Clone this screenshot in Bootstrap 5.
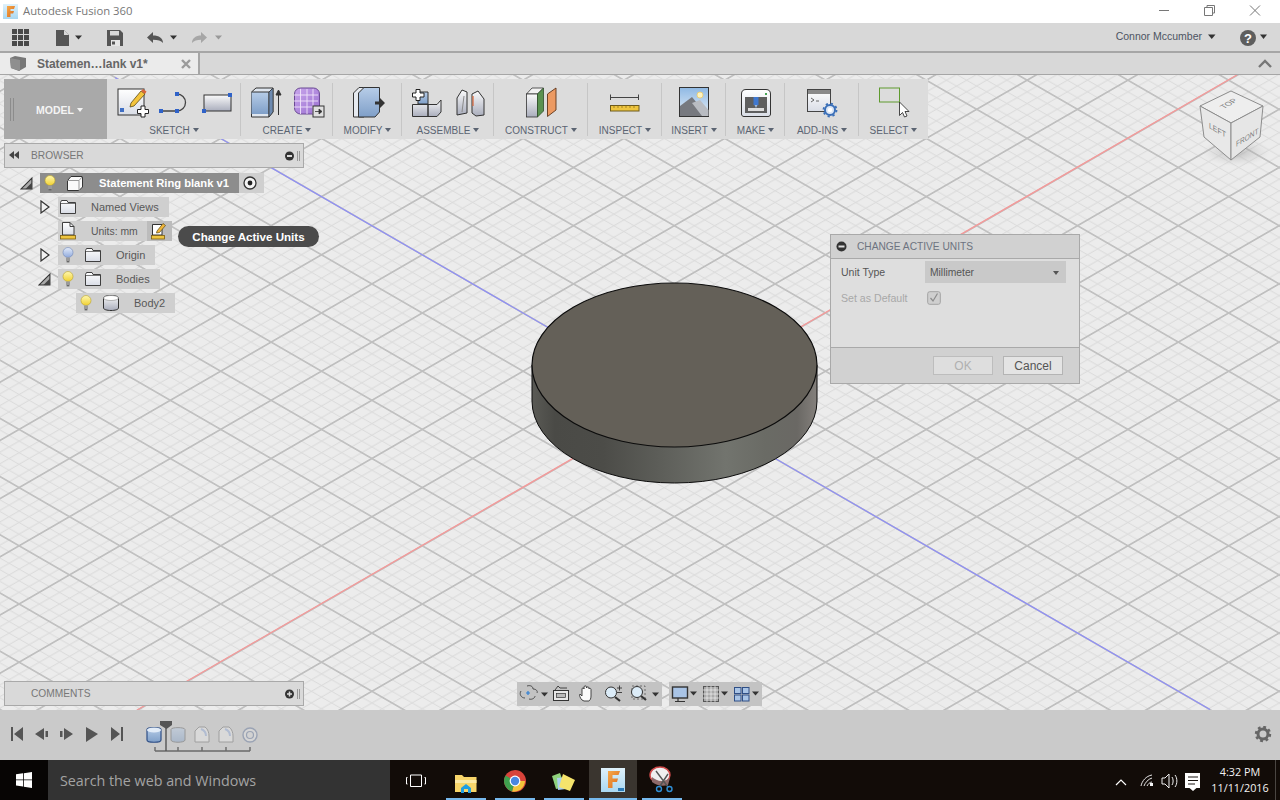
<!DOCTYPE html>
<html lang="en">
<head>
<meta charset="utf-8">
<title>Autodesk Fusion 360</title>
<link href="https://cdn.jsdelivr.net/npm/bootstrap@5.3.0/dist/css/bootstrap.min.css" rel="stylesheet">
<style>
html,body{height:100%;overflow:hidden}
body{font-family:"Liberation Sans",Arial,sans-serif;font-size:11px;color:#555;background:#ececec}
svg{display:block;flex:none}
.app{height:800px}
.titlebar{height:23px;background:#fff;color:#777;font-family:"Open Sans",sans-serif;font-size:11.3px}
.quickbar{height:28px;background:#d8d8d8}
.user-name{color:#4d5462;font-size:10.5px;margin-right:5px}
.tabbar{height:24px;background:#d8d8d8;border-top:2px solid #a6a6a6;border-bottom:1px solid #a6a6a6}
.doc-tab{width:200px;background:#ebebeb;border-right:2px solid #a6a6a6;padding-left:10px;color:#666;font-weight:700;font-size:12px}
.doc-title{margin-left:11px;width:144px;white-space:nowrap;letter-spacing:-.05px}
.stage{height:635px;overflow:hidden}
.grid-art{position:absolute;left:0;top:0}
.ribbon{position:absolute;left:4px;top:4px;height:60px;background:#dcdcdc}
.model-btn{width:103px;background:#a9a9a9;color:#f4f4f4;font-weight:700;font-size:10.5px;padding:3px 0 0 6px}
.model-grip{margin-right:21px;margin-top:-3px}
.tri{display:inline-block;width:0;height:0;border-left:3.5px solid transparent;border-right:3.5px solid transparent;border-top:4px solid currentColor;margin-left:3px;vertical-align:2px}
.tool-group{position:relative;height:60px}
.tool-group::after{content:"";position:absolute;right:0;top:4px;bottom:3px;width:1px;background:#c6c6c6}
.tool-group:last-child::after{display:none}
.tool-label{color:#5b6472;font-size:10px;line-height:12px;margin-top:5px;white-space:nowrap}
.g-sketch{width:134px}.g-create{width:92px}.g-modify{width:69px}.g-assemble{width:92px}.g-construct{width:94px}
.g-inspect{width:74px}.g-insert{width:64px}.g-make{width:59px}.g-addins{width:74px}.g-select{width:69px}
.side-panel{position:absolute;left:4px;top:68px;width:300px}
.panel-head{height:25px;background:#d9d9d9;border:1px solid #a9a9a9;color:#777;font-size:10.2px;padding-left:4px;padding-right:1px}
.panel-name{margin-left:12px}
.panel-name.solo{margin-left:22px}
.comments{position:absolute;left:4px;bottom:4px;width:300px}
.tree{margin-top:5px;margin-left:-4px}
.tree-row{height:20px;margin-bottom:4px}
.lvl0{margin-left:20px}.lvl1{margin-left:38px}.lvl2{margin-left:76px}
.twist{width:20px}
.shut{margin-left:2px}
.node{height:20px;background:#cfcfcf;color:#585858;font-size:11px}
.node.solid{background:#8d8d8d;color:#fff;font-weight:700;font-size:11.2px}
.slot-a{width:20px}.slot-b{width:30px}
.node-text{margin-left:8px;padding:1px 10px 0 0;white-space:nowrap}
.solid .node-text{margin-left:9px;padding-top:0}
.node-text.wide{margin-left:13px}
.node-text.tight{font-size:10.4px;padding-right:9px}
.node-end{height:20px;background:#cfcfcf;width:25px}
.node-end.dark{background:#bcbcbc}
.tip{position:absolute;left:178px;top:151px;height:21px;width:141px;background:#4b4b4b;color:#fff;font-weight:700;border-radius:11px;font-size:11.6px;padding-top:1px}
.dlg{position:absolute;left:830px;top:159px;width:250px;height:150px;background:#dedede;border:1px solid #a9a9a9;color:#555;font-size:10.5px}
.dlg-head{height:24px;background:#d1d1d1;border-bottom:1px solid #a9a9a9;color:#6d7380;padding-left:5px;font-size:10.2px}
.dlg-title{margin-left:10px}
.dlg-body{height:88px;padding:2px 13px 0 10px}
.field-name{width:84px;padding-top:1px}
.pick{width:141px;height:22px;background:#c9c9c9;padding:1px 7px 0 5px;color:#555;font-size:10.3px}
.muted-name{color:#a8a8a8;font-size:10.6px}
.check-box{margin-left:2px}
.dlg-row2{margin-top:4px;height:22px}
.dlg-foot{height:36px;background:#d1d1d1;border-top:1px solid #a9a9a9;padding:8px 16px 0 0;gap:10px}
.dlg-btn{width:60px;height:19px;padding:0;border-radius:0;border:1px solid #b4b4b4;background:#e4e4e4;color:#555;font-size:12px;line-height:18px}
.dlg-btn:disabled{background:#dedede;color:#b0b0b0;border-color:#bdbdbd;opacity:1}
.navs{position:absolute;left:517px;bottom:4px;gap:7px}
.cube{position:absolute;left:1190px;top:10px}
.cube text{font-family:"Liberation Sans",sans-serif;font-size:8px;fill:#7d7d7d}
.timeline{height:50px;background:#cacaca}
.taskbar{height:40px;background:#120c08;color:#f2f2f2}
.win-box{width:48px;background:#070504}
.search-box{width:342px;background:#333;color:#a3a3a3;font-family:"Open Sans",sans-serif;font-size:14.3px;padding:1px 0 0 12px}
.clock{width:76px;font-family:"Open Sans",sans-serif;font-size:10.8px;line-height:16px;text-align:center;padding-left:5px;border-right:1px solid #4a4642}
.clock-gap{width:4px}
</style>
</head>
<body>
<svg width="0" height="0" class="position-absolute">
<defs>
<linearGradient id="bulbY" x1="0" y1="0" x2="0" y2="1"><stop offset="0" stop-color="#fff8b0"/><stop offset="1" stop-color="#f0d030"/></linearGradient>
<linearGradient id="bulbB" x1="0" y1="0" x2="0" y2="1"><stop offset="0" stop-color="#e4ecfa"/><stop offset="1" stop-color="#8fa9dc"/></linearGradient>
<linearGradient id="paper" x1="0" y1="0" x2="0" y2="1"><stop offset="0" stop-color="#fff"/><stop offset="1" stop-color="#d9dde6"/></linearGradient>
<linearGradient id="steel" x1="0" y1="0" x2="0" y2="1"><stop offset="0" stop-color="#fbfbfb"/><stop offset="1" stop-color="#a9adbc"/></linearGradient>
<linearGradient id="blueBox" x1="0" y1="0" x2="0" y2="1"><stop offset="0" stop-color="#b7cde8"/><stop offset="1" stop-color="#7f9fc8"/></linearGradient>
<linearGradient id="sky" x1="0" y1="0" x2="0" y2="1"><stop offset="0" stop-color="#8fb9e4"/><stop offset="1" stop-color="#e6eef6"/></linearGradient>
<linearGradient id="purple" x1="0" y1="0" x2="1" y2="1"><stop offset="0" stop-color="#c9a6ec"/><stop offset="1" stop-color="#9a70d0"/></linearGradient>
<linearGradient id="fF" x1="0" y1="0" x2="1" y2="1"><stop offset="0" stop-color="#f6a94a"/><stop offset="1" stop-color="#d9691c"/></linearGradient>
<linearGradient id="fBg" x1="0" y1="0" x2="0" y2="1"><stop offset="0" stop-color="#dff1fb"/><stop offset="1" stop-color="#a9d8f2"/></linearGradient>
<linearGradient id="discSide" x1="0" y1="0" x2="1" y2="0"><stop offset="0" stop-color="#5a5a55"/><stop offset=".08" stop-color="#4a4a46"/><stop offset=".25" stop-color="#4c4c48"/><stop offset=".45" stop-color="#5d5e59"/><stop offset=".68" stop-color="#72746e"/><stop offset=".82" stop-color="#6a6b65"/><stop offset=".93" stop-color="#6a6864"/><stop offset="1" stop-color="#84807c"/></linearGradient>
<pattern id="isoGrid" patternUnits="userSpaceOnUse" width="50" height="50" patternTransform="matrix(1.008 -.582 1.008 .582 674.3 325.3)">
<path d="M10 0V50M20 0V50M30 0V50M40 0V50M0 10H50M0 20H50M0 30H50M0 40H50" stroke="#dcdcdc" stroke-width="1" fill="none"/>
<path d="M0 0V50M50 0V50M0 0H50M0 50H50" stroke="#bfbfbf" stroke-width="1.6" fill="none"/>
</pattern>
<symbol id="bulb" viewBox="0 0 12 16"><circle cx="6" cy="5.5" r="5" fill="url(#bulbY)" stroke="#b9a12a" stroke-width=".6"/><rect x="4" y="10.5" width="4" height="3.5" fill="#9a9a9a"/><rect x="4.6" y="14" width="2.8" height="1.4" fill="#666"/></symbol>
<symbol id="bulbOff" viewBox="0 0 12 16"><circle cx="6" cy="5.5" r="5" fill="url(#bulbB)" stroke="#6f86b8" stroke-width=".6"/><rect x="4" y="10.5" width="4" height="3.5" fill="#9a9a9a"/><rect x="4.6" y="14" width="2.8" height="1.4" fill="#666"/></symbol>
<symbol id="folder" viewBox="0 0 16 14"><path d="M.5 2.5V13.5H15.5V2.5H8L7 .5H1.5Z" fill="url(#paper)" stroke="#3f3f3f"/><path d="M.5 3.5H15.5" stroke="#3f3f3f" stroke-width=".7"/></symbol>
<symbol id="unitdoc" viewBox="0 0 16 18"><path d="M2.5 .5H10L14 4.5V13H2.5Z" fill="url(#paper)" stroke="#3f3f3f"/><path d="M10 .5V4.5H14" fill="none" stroke="#3f3f3f"/><rect x=".5" y="13.5" width="15" height="3.5" fill="#eec53f" stroke="#7a5d10" stroke-width=".8"/></symbol>
<symbol id="tw-open" viewBox="0 0 12 12"><path d="M1 11 11 1V11Z" fill="#aaa" stroke="#333"/><path d="M5 11 11 5V11Z" fill="#444"/></symbol>
<symbol id="tw-shut" viewBox="0 0 10 14"><path d="M1 1 9 7 1 13Z" fill="#f2f2f2" stroke="#333" stroke-width="1.2"/></symbol>
</defs>
</svg>

<div class="app d-flex flex-column">
  <!-- title bar -->
  <div class="titlebar d-flex align-items-center justify-content-between">
    <div class="d-flex align-items-center">
      <svg width="23" height="23" viewBox="0 0 23 23"><rect x="3" y="4" width="15" height="15" fill="url(#fBg)"/><path d="M7 6H15L14 9H10.5V11H14L13.2 13.6H10.5V17H7Z" fill="url(#fF)"/></svg>
      <span>Autodesk Fusion 360</span>
    </div>
    <svg width="140" height="23" viewBox="1140 0 140 23" fill="none" stroke="#777"><path d="M1159 10.5H1169"/><path d="M1204.5 7.5H1212.5V15.5H1204.5ZM1207 7.5V5.5H1214.5V13H1212.5"/><path d="M1250 5.5 1260 15.5M1260 5.5 1250 15.5"/></svg>
  </div>
  <!-- quick access -->
  <div class="quickbar d-flex align-items-center justify-content-between">
    <svg width="240" height="28" viewBox="0 23 240 28">
      <path d="M12 29h5v5h-5zM18 29h5v5h-5zM24 29h5v5h-5zM12 35h5v5h-5zM18 35h5v5h-5zM24 35h5v5h-5zM12 41h5v5h-5zM18 41h5v5h-5zM24 41h5v5h-5z" fill="#4a4a4a"/>
      <path d="M56 30H64L69 35V46H56Z" fill="#555"/><path d="M64 30V35H69Z" fill="#d8d8d8"/><path d="M75 35.500h7l-3.500 4z" fill="#333"/>
      <path d="M107 30H120L123 33V46H107Z" fill="#555"/><rect x="110" y="31" width="9" height="4.500" fill="#d8d8d8"/><rect x="111" y="40" width="9" height="6" fill="#e6e6e6"/><rect x="112" y="41.500" width="3" height="3" fill="#555"/>
      <path d="M147 37.500 153 32V35.500C159 35.500 163 38 163 43C161 40.500 158 39.700 153 39.700V43Z" fill="#555"/><path d="M170 35.500h7l-3.500 4z" fill="#333"/>
      <path d="M207 37.500 201 32V35.500C196 35.500 192 38 192 43C194 40.500 197 39.700 201 39.700V43Z" fill="#a6a6a6"/><path d="M215 35.500h7l-3.500 4z" fill="#999"/>
    </svg>
    <div class="d-flex align-items-center">
      <span class="user-name">Connor Mccumber</span>
      <svg width="73" height="28" viewBox="1207 23 73 28"><path d="M1208 34.500h7.500l-3.750 4.500z" fill="#333"/><circle cx="1248" cy="38" r="8" fill="#5e5e5e"/><text x="1248" y="42.500" text-anchor="middle" font-family="Liberation Sans" font-size="13" font-weight="700" fill="#fff">?</text><path d="M1260 34.500h7l-3.500 4.500z" fill="#333"/></svg>
    </div>
  </div>
  <!-- tabs -->
  <div class="tabbar d-flex justify-content-between">
    <div class="doc-tab d-flex align-items-center">
      <svg width="16" height="16" viewBox="0 0 16 16"><path d="M0 2 5 0 16 2V11L9 15 1 12Z" fill="#777"/><path d="M0 2 10 4V15L1 12Z" fill="#8f8f8f"/></svg>
      <span class="doc-title">Statemen…lank v1*</span>
      <svg width="10" height="10" viewBox="0 0 10 10"><path d="M1 1 9 9M9 1 1 9" stroke="#9b9b9b" stroke-width="2.400"/></svg>
    </div>
    <svg class="align-self-center me-2" width="14" height="9" viewBox="0 0 14 9"><path d="M1 8 7 2 13 8" fill="none" stroke="#777" stroke-width="2.400"/></svg>
  </div>

  <!-- 3D canvas -->
  <div class="stage position-relative flex-grow-0">
    <svg class="grid-art" width="1280" height="635" viewBox="0 0 1280 635">
      <rect width="1280" height="635" fill="#ececec"/>
      <rect width="1280" height="635" fill="url(#isoGrid)"/>
      <path d="M1237 0 137 635" stroke="#f49a9a" stroke-width="1.400"/>
      <path d="M115 2.500 1210 634.500" stroke="#8e8ef5" stroke-width="1.200"/>
      <path d="M532 290V326A142.500 82 0 0 0 817 326V290Z" fill="url(#discSide)" stroke="#0c0c0c"/>
      <ellipse cx="674.500" cy="290" rx="142.500" ry="82" fill="#646058" stroke="#0c0c0c" stroke-width="1.200"/>
    </svg>

    <!-- ribbon -->
    <div class="ribbon d-flex">
      <div class="model-btn d-flex align-items-center">
        <svg class="model-grip" width="5" height="23" viewBox="0 0 5 23"><path d="M.5 0V23M3.500 0V23" stroke="#8c8c8c"/></svg>
        <span>MODEL<i class="tri"></i></span>
      </div>
      <div class="tool-group g-sketch d-flex flex-column align-items-center">
        <svg width="134" height="41" viewBox="107 79 134 41">
          <rect x="118" y="89" width="26" height="26" fill="url(#paper)" stroke="#333"/>
          <path d="M131 103 141 91 145 94 134 106 130 107Z" fill="#f4c43c" stroke="#5a4a14" stroke-width=".8"/><path d="M141 91 143 89 146.500 91.500 145 94Z" fill="#d9663a"/>
          <rect x="120" y="108" width="4" height="4" fill="#3f6fc4"/>
          <path d="M137.500 109.500H141V106H145V109.500H148.500V113.500H145V117H141V113.500H137.500Z" fill="#fff" stroke="#222"/>
          <path d="M161 111H177A8.500 8.500 0 0 0 177 94" fill="none" stroke="#444" stroke-width="1.300"/>
          <rect x="159" y="109" width="4" height="4" fill="#2f62c8"/><rect x="175" y="109" width="4" height="4" fill="#2f62c8"/><rect x="175" y="92" width="4" height="4" fill="#2f62c8"/>
          <rect x="204" y="95" width="27" height="16" fill="url(#steel)" stroke="#333"/>
          <rect x="228" y="93" width="4" height="4" fill="#2f62c8"/><rect x="202" y="109" width="4" height="4" fill="#2f62c8"/>
        </svg>
        <span class="tool-label">SKETCH<i class="tri"></i></span>
      </div>
      <div class="tool-group g-create d-flex flex-column align-items-center">
        <svg width="92" height="41" viewBox="241 79 92 41">
          <path d="M251.500 92 256 88H273V112L269 117H251.500Z" fill="#dfe6ef" stroke="#333"/><rect x="251.500" y="92" width="17.500" height="22" fill="url(#blueBox)"/><path d="M269 92V117M251.500 92H269L273 88" fill="none" stroke="#333"/><path d="M269 92 273 88V112L269 117Z" fill="#6d8ab0" stroke="#333" stroke-width=".7"/>
          <path d="M278.500 115V92M276 95 278.500 90 281 95Z" stroke="#333" fill="#333"/>
          <rect x="294.500" y="88" width="25" height="26" rx="6" fill="url(#purple)" stroke="#6b4a94"/>
          <path d="M294 95H318M294 101H318M294 107H318M300.500 89V114M307 89V114M313 89V114" stroke="#f0e4fb" stroke-width=".9"/>
          <rect x="313" y="106" width="11" height="11" fill="#e0e0e0" stroke="#333"/><path d="M315 111.500H319V109L322 111.500 319 114V111.500" fill="#333" stroke="#333" stroke-width=".8"/>
        </svg>
        <span class="tool-label">CREATE<i class="tri"></i></span>
      </div>
      <div class="tool-group g-modify d-flex flex-column align-items-center">
        <svg width="69" height="41" viewBox="333 79 69 41">
          <path d="M353.500 117V93L359 87.500H364V117Z" fill="#e6eaf0" stroke="#333"/><path d="M358.500 117V93L364 87.500H379.500V112L375 117Z" fill="url(#blueBox)" stroke="#333"/>
          <path d="M375 101.500H380V98L385 103 380 108V104.500H375Z" fill="#333"/>
        </svg>
        <span class="tool-label">MODIFY<i class="tri"></i></span>
      </div>
      <div class="tool-group g-assemble d-flex flex-column align-items-center">
        <svg width="92" height="41" viewBox="402 79 92 41">
          <path d="M412.500 104.500H428V116.500H412.500ZM428 104.500H437L441 100V112L437 116.500H428Z" fill="url(#steel)" stroke="#333"/>
          <path d="M418 92H428V104H418Z" fill="url(#blueBox)" stroke="#333"/>
          <path d="M416 89.500H420V93H424V97H420V100.500H416V97H412.500V93H416Z" fill="#fff" stroke="#222"/>
          <path d="M457 115V98L462 90 467 92V113Z" fill="url(#steel)" stroke="#333"/><path d="M472 113V94L478 91 484 99V115L476 116Z" fill="url(#steel)" stroke="#333"/>
          <path d="M473 96V106" stroke="#d9663a" stroke-width="1.200"/><path d="M464 96 462 112" stroke="#8a8a8a"/>
        </svg>
        <span class="tool-label">ASSEMBLE<i class="tri"></i></span>
      </div>
      <div class="tool-group g-construct d-flex flex-column align-items-center">
        <svg width="94" height="41" viewBox="494 79 94 41">
          <path d="M526.500 94 532 88H543.500L537.500 94Z" fill="#f2f2f2" stroke="#333" stroke-width=".8"/><rect x="526.500" y="94" width="11" height="23" fill="url(#steel)" stroke="#333" stroke-width=".8"/><path d="M537.500 94 543.500 88V111L537.500 117Z" fill="#5a9250" stroke="#2f4f2a" stroke-width=".8"/>
          <path d="M547.500 94 556 88V110L547.500 116.500Z" fill="#ec9a62" stroke="#5e3418" stroke-width=".9"/>
        </svg>
        <span class="tool-label">CONSTRUCT<i class="tri"></i></span>
      </div>
      <div class="tool-group g-inspect d-flex flex-column align-items-center">
        <svg width="74" height="41" viewBox="588 79 74 41">
          <path d="M610.500 94.500V100M638.500 94.500V100M610.500 97.500H638.500" stroke="#444" fill="none"/>
          <rect x="610.500" y="105.500" width="28.500" height="5.500" fill="#eec53f" stroke="#6c5a1e"/>
          <path d="M614 105.500V108M618 105.500V108M622 105.500V108M626 105.500V108M630 105.500V108M634 105.500V108" stroke="#8a6c14" stroke-width=".7"/>
        </svg>
        <span class="tool-label">INSPECT<i class="tri"></i></span>
      </div>
      <div class="tool-group g-insert d-flex flex-column align-items-center">
        <svg width="64" height="41" viewBox="662 79 64 41">
          <rect x="679.500" y="87.500" width="29" height="29" fill="url(#sky)" stroke="#333"/>
          <circle cx="700" cy="95" r="3" fill="#fdf3c0" stroke="#efc85a" stroke-width=".7"/>
          <path d="M680 116V106L692 97 708 116Z" fill="#77797f"/><path d="M692 103 700 100 708.500 110V116H702Z" fill="#b9bcc2"/>
        </svg>
        <span class="tool-label">INSERT<i class="tri"></i></span>
      </div>
      <div class="tool-group g-make d-flex flex-column align-items-center">
        <svg width="59" height="41" viewBox="726 79 59 41">
          <path d="M741.500 94C741.500 91 743 89.500 746 89.500H766C769 89.500 770.500 91 770.500 94V114C770.500 115.500 769.500 116.500 768 116.500H744C742.500 116.500 741.500 115.500 741.500 114Z" fill="url(#paper)" stroke="#333"/>
          <rect x="745" y="97" width="22" height="16" fill="#5f5f5f"/><rect x="753.500" y="97" width="5" height="8" fill="#3f78d0"/><path d="M754.500 105H757.500L756 108Z" fill="#9fb9dd"/>
          <rect x="748" y="108" width="16" height="3" fill="#ddd"/><circle cx="766" cy="94" r="1" fill="#0a8a1e"/>
        </svg>
        <span class="tool-label">MAKE<i class="tri"></i></span>
      </div>
      <div class="tool-group g-addins d-flex flex-column align-items-center">
        <svg width="74" height="41" viewBox="785 79 74 41">
          <rect x="807.500" y="89.500" width="23" height="22" fill="url(#paper)" stroke="#444"/><rect x="808" y="90" width="22" height="4" fill="#8a8a8a"/>
          <path d="M811 98 814 100 811 102M816 101H819" fill="none" stroke="#444" stroke-width=".8"/>
          <circle cx="830" cy="110" r="5" fill="#dbe6f6" stroke="#3a6fb8" stroke-width="2"/><circle cx="830" cy="110" r="6.500" fill="none" stroke="#3a6fb8" stroke-width="1.800" stroke-dasharray="2.200 2.900"/><circle cx="830" cy="110" r="2.200" fill="#fff"/>
        </svg>
        <span class="tool-label">ADD-INS<i class="tri"></i></span>
      </div>
      <div class="tool-group g-select d-flex flex-column align-items-center">
        <svg width="69" height="41" viewBox="859 79 69 41">
          <rect x="879.500" y="88" width="20" height="14" fill="#dcdcdc" stroke="#5e9a2e"/>
          <path d="M899.500 102V115.500L902.500 112.500 904.500 117 907 116 905 111.500H909Z" fill="#fff" stroke="#333" stroke-width=".9"/>
        </svg>
        <span class="tool-label">SELECT<i class="tri"></i></span>
      </div>
    </div>

    <!-- browser -->
    <div class="side-panel">
      <div class="panel-head d-flex align-items-center justify-content-between">
        <div class="d-flex align-items-center">
          <svg width="10" height="8" viewBox="0 0 10 8"><path d="M5 0V8L0 4ZM10 0V8L5 4Z" fill="#444"/></svg>
          <span class="panel-name">BROWSER</span>
        </div>
        <svg width="18" height="14" viewBox="0 0 18 14"><circle cx="5.500" cy="7" r="4.500" fill="#333"/><rect x="3" y="6" width="5" height="2" fill="#ddd"/><path d="M13.500 2V12M15.500 2V12" stroke="#999"/></svg>
      </div>
      <div class="tree">
        <div class="tree-row lvl0 d-flex align-items-center">
          <div class="twist"><svg width="13" height="13"><use href="#tw-open"/></svg></div>
          <div class="node solid d-flex align-items-center">
            <div class="slot-a d-flex justify-content-center"><svg width="12" height="16"><use href="#bulb"/></svg></div>
            <div class="slot-b d-flex justify-content-center"><svg width="16" height="15" viewBox="0 0 16 15"><path d="M.5 4.500 4 .5H15.500V11L12 14.500H.5Z" fill="#fafafa" stroke="#333"/><path d="M.5 4.500H12V14.500M12 4.500 15.500 .5" fill="none" stroke="#999"/></svg></div>
            <span class="node-text">Statement Ring blank v1</span>
          </div>
          <div class="node-end d-flex align-items-center ps-1"><svg width="14" height="14" viewBox="0 0 14 14"><circle cx="7" cy="7" r="6" fill="#f4f4f4" stroke="#333" stroke-width="1.300"/><circle cx="7" cy="7" r="2.400" fill="#222"/></svg></div>
        </div>
        <div class="tree-row lvl1 d-flex align-items-center">
          <div class="twist"><svg class="shut" width="10" height="14"><use href="#tw-shut"/></svg></div>
          <div class="node d-flex align-items-center">
            <div class="slot-a d-flex justify-content-center"><svg width="16" height="14"><use href="#folder"/></svg></div>
            <span class="node-text wide">Named Views</span>
          </div>
        </div>
        <div class="tree-row lvl1 d-flex align-items-center">
          <div class="twist"></div>
          <div class="node d-flex align-items-center">
            <div class="slot-a d-flex justify-content-center"><svg width="16" height="18"><use href="#unitdoc"/></svg></div>
            <span class="node-text wide tight">Units: mm</span>
          </div>
          <div class="node-end dark d-flex align-items-center justify-content-center">
            <svg width="16" height="18" viewBox="0 0 16 18"><path d="M1.500 2.500H11V13H1.500Z" fill="#fff" stroke="#333"/><path d="M6 9 12 1.500 14.500 3.500 8.500 10.500 5.500 11Z" fill="#f0b53a" stroke="#5a4a14" stroke-width=".7"/><rect x=".5" y="13.500" width="13" height="3.500" fill="#eec53f" stroke="#7a5d10" stroke-width=".8"/></svg>
          </div>
        </div>
        <div class="tree-row lvl1 d-flex align-items-center">
          <div class="twist"><svg class="shut" width="10" height="14"><use href="#tw-shut"/></svg></div>
          <div class="node d-flex align-items-center">
            <div class="slot-a d-flex justify-content-center"><svg width="12" height="16"><use href="#bulbOff"/></svg></div>
            <div class="slot-b d-flex justify-content-center"><svg width="16" height="14"><use href="#folder"/></svg></div>
            <span class="node-text">Origin</span>
          </div>
        </div>
        <div class="tree-row lvl1 d-flex align-items-center">
          <div class="twist"><svg width="13" height="13"><use href="#tw-open"/></svg></div>
          <div class="node d-flex align-items-center">
            <div class="slot-a d-flex justify-content-center"><svg width="12" height="16"><use href="#bulb"/></svg></div>
            <div class="slot-b d-flex justify-content-center"><svg width="16" height="14"><use href="#folder"/></svg></div>
            <span class="node-text">Bodies</span>
          </div>
        </div>
        <div class="tree-row lvl2 d-flex align-items-center">
          <div class="node d-flex align-items-center">
            <div class="slot-a d-flex justify-content-center"><svg width="12" height="16"><use href="#bulb"/></svg></div>
            <div class="slot-b d-flex justify-content-center"><svg width="16" height="16" viewBox="0 0 16 16"><path d="M.5 3C.5 1.500 4 .5 8 .5S15.500 1.500 15.500 3V13C15.500 14.500 12 15.500 8 15.500S.5 14.500.5 13Z" fill="url(#steel)" stroke="#333"/><ellipse cx="8" cy="3" rx="7.500" ry="2.500" fill="#fff" stroke="#888" stroke-width=".6"/></svg></div>
            <span class="node-text">Body2</span>
          </div>
        </div>
      </div>
    </div>

    <div class="tip d-flex align-items-center justify-content-center">Change Active Units</div>

    <!-- dialog -->
    <div class="dlg">
      <div class="dlg-head d-flex align-items-center">
        <svg width="11" height="11" viewBox="0 0 11 11"><circle cx="5.500" cy="5.500" r="5" fill="#333"/><rect x="2.500" y="4.500" width="6" height="2" fill="#ddd"/></svg>
        <span class="dlg-title">CHANGE ACTIVE UNITS</span>
      </div>
      <div class="dlg-body">
        <div class="d-flex align-items-center">
          <span class="field-name">Unit Type</span>
          <div class="pick d-flex align-items-center justify-content-between">Millimeter<i class="tri"></i></div>
        </div>
        <div class="dlg-row2 d-flex align-items-center">
          <span class="field-name muted-name">Set as Default</span>
          <svg class="check-box" width="14" height="14" viewBox="0 0 14 14"><rect x=".7" y=".7" width="12.600" height="12.600" rx="2" fill="#cfcfcf" stroke="#a3a3a3"/><path d="M3.500 7 6 10 10.500 2.500" fill="none" stroke="#8c8c8c" stroke-width="1.200"/></svg>
        </div>
      </div>
      <div class="dlg-foot d-flex justify-content-end">
        <button class="btn dlg-btn" disabled>OK</button>
        <button class="btn dlg-btn">Cancel</button>
      </div>
    </div>

    <!-- view cube -->
    <svg class="cube" width="90" height="90" viewBox="1190 85 90 90">
      <defs><radialGradient id="cubeShade"><stop offset="0" stop-color="#9a9a9a" stop-opacity=".55"/><stop offset="1" stop-color="#bbb" stop-opacity="0"/></radialGradient></defs>
      <ellipse cx="1236" cy="152" rx="34" ry="14" fill="url(#cubeShade)"/>
      <path d="M1200 106 1231 91 1263 106 1231 123Z" fill="#eeeeee" stroke="#8d8d8d"/>
      <path d="M1200 106 1231 123V160L1204 137Z" fill="#e8e8e8" stroke="#8d8d8d"/>
      <path d="M1263 106 1231 123V160L1260 137Z" fill="#e6e6e6" stroke="#8d8d8d"/>
      <text transform="matrix(.87 -.5 .87 .5 1224 109)">TOP</text>
      <text transform="matrix(.87 .5 0 1 1209 128)">LEFT</text>
      <text transform="matrix(.82 -.5 0 1 1236 147)">FRONT</text>
    </svg>

    <!-- comments -->
    <div class="comments">
      <div class="panel-head d-flex align-items-center justify-content-between">
        <span class="panel-name solo">COMMENTS</span>
        <svg width="18" height="14" viewBox="0 0 18 14"><circle cx="5.500" cy="7" r="4.500" fill="#333"/><path d="M3 7H8M5.500 4.500V9.500" stroke="#ddd" stroke-width="1.500"/><path d="M13.500 2V12M15.500 2V12" stroke="#999"/></svg>
      </div>
    </div>

    <!-- navigation bar -->
    <div class="navs d-flex">
      <svg width="145" height="24" viewBox="517 682 145 24">
        <rect x="517" y="682" width="145" height="24" fill="#c3c3c3"/>
        <path d="M527 686C530 685 533 686 533 689C536 689 538 691 537 693M521 691C519 694 521 698 525 698M529 699C532 700 535 698 535 696" fill="none" stroke="#444" stroke-width=".9"/><path d="M526 693H530M528 691V695" stroke="#2d7fd6" stroke-width="1.200"/>
        <path d="M541 692.500h7l-3.500 4z" fill="#333"/>
        <rect x="553.500" y="690.500" width="15" height="10" fill="#e8e8e8" stroke="#333"/><rect x="556.500" y="693.500" width="9" height="4" fill="#bbb" stroke="#333" stroke-width=".7"/><path d="M555 690 558 686 560 688H567" fill="none" stroke="#333" stroke-width=".9"/>
        <path d="M582 700C580 698 579 695 580 694L582 696V689C582 687.500 584 687.500 584 689V687C584 685.500 586.500 685.500 586.500 687V688C586.500 686.500 589 686.500 589 688V689C589 688 591 688 591 689.500V696C591 699 590 700 589 701H584Z" fill="#fafafa" stroke="#333" stroke-width=".9"/>
        <circle cx="611" cy="692.500" r="5.500" fill="#dcecf8" stroke="#333"/><path d="M615 697 620 701" stroke="#333" stroke-width="2.200"/><path d="M618 688H623M620.500 685.500V690.500M618 692.500H623" stroke="#333" stroke-width=".9" transform="translate(-1 0)"/>
        <rect x="632" y="686" width="13" height="13" fill="none" stroke="#555" stroke-width=".8" stroke-dasharray="2 2"/><circle cx="637" cy="692" r="5.500" fill="#dcecf8" stroke="#333"/><path d="M641 696 646 700" stroke="#333" stroke-width="2.200"/>
        <path d="M652 692.500h7l-3.500 4z" fill="#333"/>
      </svg>
      <svg width="93" height="24" viewBox="669 682 93 24">
        <rect x="669" y="682" width="93" height="24" fill="#c3c3c3"/>
        <rect x="672.500" y="687" width="15" height="11" fill="#a9c4e6" stroke="#333" stroke-width="1.400"/><path d="M678 698V701M675 701.500H685" stroke="#333" stroke-width="1.200"/>
        <path d="M690 691.500h7l-3.500 4z" fill="#333"/>
        <rect x="703.500" y="686.500" width="15" height="15" fill="#aaa" stroke="#555"/><path d="M707 686V702M711 686V702M715 686V702M703 690H719M703 694H719M703 698H719" stroke="#f2f2f2" stroke-width=".7"/>
        <path d="M721 691.500h7l-3.500 4z" fill="#333"/>
        <rect x="734.500" y="687.500" width="6.500" height="6" fill="#a9c4e6" stroke="#2f4f86"/><rect x="742.500" y="687.500" width="6.500" height="6" fill="#a9c4e6" stroke="#2f4f86"/><rect x="734.500" y="695" width="6.500" height="6" fill="#a9c4e6" stroke="#2f4f86"/><rect x="742.500" y="695" width="6.500" height="6" fill="#a9c4e6" stroke="#2f4f86"/>
        <path d="M752 691.500h7l-3.500 4z" fill="#333"/>
      </svg>
    </div>
  </div>

  <!-- timeline -->
  <div class="timeline d-flex align-items-start justify-content-between">
    <svg width="270" height="50" viewBox="0 710 270 50">
      <g fill="#555">
        <path d="M11 727H13V741H11ZM23 727V741L14 734Z"/>
        <path d="M35 734 44 728V740ZM45.500 731H48V737H45.500Z"/>
        <path d="M60 731H62.500V737H60ZM64 728 73 734 64 740Z"/>
        <path d="M86 727 98 734 86 742Z"/>
        <path d="M111 727 120 734 111 741ZM121 727H123V741H121Z"/>
      </g>
      <path d="M155 751H250M155 751V747M178 751V747M202 751V747M226 751V747M250 751V747" stroke="#6a6a6a" stroke-width="1.400" fill="none"/>
      <path d="M147 729.500C147 727 161 727 161 729.500V740C161 743 147 743 147 740Z" fill="url(#blueBox)" stroke="#2f4f86" stroke-width="1.200"/><ellipse cx="154" cy="730" rx="7" ry="2.500" fill="#e2ecf8"/>
      <g opacity=".42">
        <path d="M171 729.500C171 727 185 727 185 729.500V740C185 743 171 743 171 740Z" fill="url(#blueBox)" stroke="#555"/>
        <path d="M195 731 199 727H205C208 729 209 733 209 736V742H195Z" fill="#efefef" stroke="#666"/><path d="M201 729C204 730 206 733 206 736" fill="none" stroke="#8fa9dc" stroke-width="2"/>
        <path d="M219 731 223 727H229C232 729 233 733 233 736V742H219Z" fill="#efefef" stroke="#666"/><path d="M225 729C228 730 230 733 230 736" fill="none" stroke="#8fa9dc" stroke-width="2"/>
        <circle cx="250" cy="735" r="7" fill="#e6e6e6" stroke="#5a6e96" stroke-width="1.400"/><circle cx="250" cy="735" r="3.500" fill="#ddd" stroke="#5a6e96" stroke-width="1.200"/>
      </g>
      <path d="M160 721H172V725L166.500 729 160 725Z" fill="#555"/><path d="M166 728V751" stroke="#555" stroke-width="1.400"/>
    </svg>
    <svg class="mt-3" width="26" height="20" viewBox="1254 726 26 20">
      <circle cx="1263" cy="734" r="5" fill="none" stroke="#666" stroke-width="3"/><circle cx="1263" cy="734" r="7" fill="none" stroke="#666" stroke-width="2.400" stroke-dasharray="2.800 2.700"/>
    </svg>
  </div>

  <!-- taskbar -->
  <div class="taskbar d-flex align-items-stretch">
    <div class="win-box d-flex align-items-center justify-content-center">
      <svg width="16" height="16" viewBox="0 0 16 16" fill="#fff"><path d="M0 2.300 7 1.300V7.500H0ZM7.800 1.200 16 0V7.500H7.800ZM0 8.300H7V14.600L0 13.600ZM7.800 8.300H16V16L7.800 14.800Z"/></svg>
    </div>
    <div class="search-box d-flex align-items-center">Search the web and Windows</div>
    <svg width="300" height="40" viewBox="390 760 300 40">
      <rect x="589" y="760" width="48" height="40" fill="#3a352f"/>
      <g fill="#76b9ed"><rect x="446" y="798" width="40" height="2"/><rect x="495" y="798" width="40" height="2"/><rect x="544" y="798" width="40" height="2"/><rect x="589" y="798" width="48" height="2"/><rect x="642" y="798" width="40" height="2"/></g>
      <path d="M410.500 775H421.500V786.500H410.500ZM407.500 777.500H406.500V784H407.500M424.500 777.500H425.500V784H424.500" fill="none" stroke="#fff"/>
      <path d="M455 775H462L464 777H476.500V792H455Z" fill="#f7d56a"/><rect x="455" y="780" width="21.500" height="3" fill="#fbe9a6"/><path d="M461 793V788L466 784 471 788V793H468V789H464V793Z" fill="#1f9fe4"/>
      <circle cx="515" cy="781" r="11" fill="#d8433a"/><path d="M515 781 525 781A11 11 0 0 1 512 791.500Z" fill="#f3c33a"/><path d="M515 781 512 791.500A11 11 0 0 1 505.500 775.500Z" fill="#3fa04e"/><circle cx="515" cy="781" r="5.400" fill="#fff"/><circle cx="515" cy="781" r="4.200" fill="#4a86e0"/>
      <path d="M552 776 560 773 565 787 556 789Z" fill="#8fd27c"/><path d="M557 778 567 777 566 789 558 790Z" fill="#a9d0ee"/><path d="M563 774 575 780 570 791 559 787Z" fill="#f5e46c"/>
      <rect x="601" y="768" width="24" height="24" fill="url(#fBg)"/><path d="M608 771H620L618.500 775H612.500V778.500H618L617 782H612.500V788H608Z" fill="url(#fF)"/><rect x="618" y="788" width="6" height="3" fill="#2a7ab8"/>
      <ellipse cx="660" cy="775" rx="10" ry="8" fill="#f0eff0" stroke="#d04a4a" stroke-width="1.400"/><path d="M652 777C656 781 664 783 670 778L668 785C662 787 656 785 652 782Z" fill="#8d6a6a"/>
      <path d="M656 771 668 787M668 774 660 786" stroke="#555" stroke-width="1.400"/><circle cx="669.500" cy="789" r="2.500" fill="none" stroke="#2f8fd6" stroke-width="1.400"/><circle cx="659" cy="789" r="2.500" fill="none" stroke="#2f8fd6" stroke-width="1.400"/>
    </svg>
    <div class="flex-grow-1"></div>
    <svg width="90" height="40" viewBox="1110 760 90 40">
      <path d="M1116 785 1121 780 1126 785" fill="none" stroke="#fff" stroke-width="1.200"/>
      <g fill="none" stroke="#e6e6e6" stroke-width="1"><path d="M1141 786C1142 781 1146 776 1152 775"/><path d="M1144 786C1145 783 1148 779 1152 778"/><path d="M1147 786C1148 784 1150 782 1152 782"/></g><rect x="1150" y="783" width="3" height="3" fill="#f5f5f5"/>
      <path d="M1162 778H1165L1169 774V788L1165 784H1162Z" fill="none" stroke="#f0f0f0"/><path d="M1172 777C1173.500 779 1173.500 783 1172 785M1175 775C1177.500 778 1177.500 784 1175 787" fill="none" stroke="#f0f0f0"/>
      <path d="M1185 773H1201V788H1196.500L1193 791 1189.500 788H1185Z" fill="#fff"/><path d="M1188 777H1198M1188 780.500H1198M1188 784H1195" stroke="#1a1410" stroke-width="1.100"/>
    </svg>
    <div class="clock d-flex flex-column justify-content-center"><span>4:32 PM</span><span>11/11/2016</span></div>
    <div class="flex-shrink-0 clock-gap"></div>
  </div>
</div>
</body>
</html>
